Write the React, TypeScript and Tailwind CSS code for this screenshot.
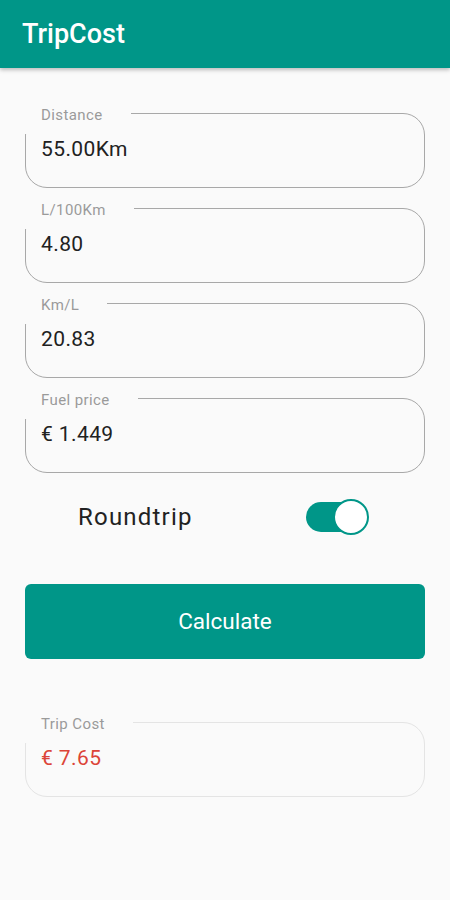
import React from "react";

function Field({ label, value, light, valueClass }: { label: string; value: string; light?: boolean; valueClass?: string }) {
  return (
    <div
      className={`relative h-[75px] rounded-[22px] border ${light ? "border-[#e4e4e4]" : "border-[#a8a8a8]"} pl-[15px] pt-[23px]`}
    >
      <div className="absolute left-[-2px] top-[-11px] h-[31px] bg-[#fafafa] pl-[17px] pr-[28px] text-[15px] leading-[24px] tracking-[0.4px] text-[#9a9a9a]">
        {label}
      </div>
      <div className={`relative text-[21px] leading-[24px] tracking-[0.4px] ${valueClass ?? "text-[#212121]"}`}>{value}</div>
    </div>
  );
}

export default function App() {
  return (
    <div className="min-h-[900px] bg-[#fafafa]" style={{ fontFamily: "Roboto, 'Noto Sans', sans-serif" }}>
      <div className="relative z-10 flex h-[68px] items-center bg-[#009688] pl-[22px] shadow-[0_2px_4px_rgba(0,0,0,0.25)]">
        <span className="text-[27px] font-medium leading-none text-white">TripCost</span>
      </div>
      <div className="flex flex-col px-[25px] pt-[45px]">
        <div className="flex flex-col gap-[20px]">
          <Field label="Distance" value="55.00Km" />
          <Field label="L/100Km" value="4.80" />
          <Field label="Km/L" value="20.83" />
          <Field label="Fuel price" value="€ 1.449" />
        </div>
        <div className="mt-[25px] flex h-[38px] items-center">
          <span className="ml-[53px] text-[24px] tracking-[1.2px] text-[#222]">Roundtrip</span>
          <div className="relative ml-auto mr-[57px] h-[30px] w-[62px] rounded-full bg-[#009688]">
            <div className="absolute right-[-1px] top-[-3px] h-[36px] w-[36px] rounded-full border-[2px] border-[#009688] bg-white" />
          </div>
        </div>
        <div className="mt-[48px] flex h-[75px] items-center justify-center rounded-[6px] bg-[#009688] text-[22.5px] text-white">
          Calculate
        </div>
        <div className="mt-[63px]">
          <Field label="Trip Cost" value="€ 7.65" light valueClass="text-[#dc4438]" />
        </div>
      </div>
    </div>
  );
}
